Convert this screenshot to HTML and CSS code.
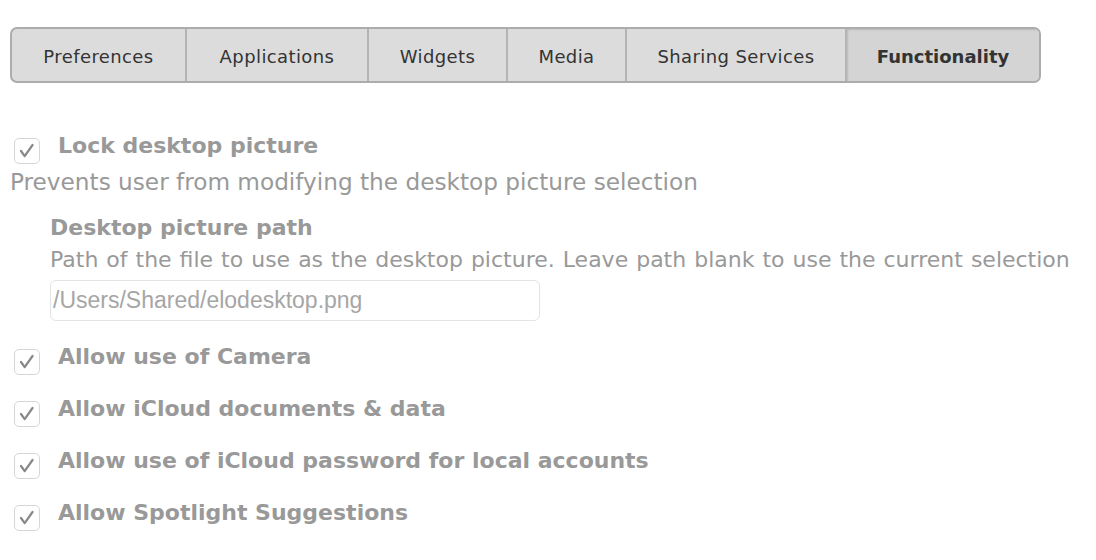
FILE: index.html
```html
<!DOCTYPE html>
<html lang="en">
<head>
    <meta charset="UTF-8">
    <title>Functionality</title>
    <link rel="stylesheet" href="styles.css">
</head>
<body>
    <nav class="tabs">
        <a href="#" class="tab tab-pref">Preferences</a>
        <a href="#" class="tab tab-apps">Applications</a>
        <a href="#" class="tab tab-widgets">Widgets</a>
        <a href="#" class="tab tab-media">Media</a>
        <a href="#" class="tab tab-sharing">Sharing Services</a>
        <a href="#" class="tab tab-func active">Functionality</a>
    </nav>

    <div class="settings">
        <div class="option">
            <label class="check-row">
                <span class="box"><svg viewBox="0 0 26 26"><path d="M6.5 13 L10.5 18.5 L19 6.5"/></svg></span>
                <span class="check-label">Lock desktop picture</span>
            </label>
            <div class="desc">Prevents user from modifying the desktop picture selection</div>
        </div>

        <div class="sub-option">
            <div class="sub-title">Desktop picture path</div>
            <div class="sub-desc">Path of the file to use as the desktop picture. Leave path blank to use the current selection</div>
            <input type="text" class="path-input" placeholder="/Users/Shared/elodesktop.png">
        </div>

        <label class="check-row">
            <span class="box"><svg viewBox="0 0 26 26"><path d="M6.5 13 L10.5 18.5 L19 6.5"/></svg></span>
            <span class="check-label">Allow use of Camera</span>
        </label>
        <label class="check-row">
            <span class="box"><svg viewBox="0 0 26 26"><path d="M6.5 13 L10.5 18.5 L19 6.5"/></svg></span>
            <span class="check-label">Allow iCloud documents &amp; data</span>
        </label>
        <label class="check-row">
            <span class="box"><svg viewBox="0 0 26 26"><path d="M6.5 13 L10.5 18.5 L19 6.5"/></svg></span>
            <span class="check-label">Allow use of iCloud password for local accounts</span>
        </label>
        <label class="check-row">
            <span class="box"><svg viewBox="0 0 26 26"><path d="M6.5 13 L10.5 18.5 L19 6.5"/></svg></span>
            <span class="check-label">Allow Spotlight Suggestions</span>
        </label>
    </div>
</body>
</html>
```

FILE: styles.css
```css
body {
    margin: 0;
    padding: 27px 10px 0;
    font-family: "DejaVu Sans", sans-serif;
    color: #999;
    background: #fff;
    overflow: hidden;
    white-space: nowrap;
}
.tabs {
    display: flex;
    width: 1027px;
    height: 52px;
    border: 2px solid #acacac;
    border-radius: 7px;
    background-color: #dcdcdc;
    overflow: hidden;
}
.tab {
    display: flex;
    align-items: center;
    justify-content: center;
    padding-top: 3px;
    color: #333;
    font-size: 18px;
    letter-spacing: 0.4px;
    text-decoration: none;
    border-left: 2px solid #b4b4b4;
}
.tab:first-child {
    border-left: none;
}
.tab-pref { width: 173px; }
.tab-apps { width: 180px; }
.tab-widgets { width: 137px; }
.tab-media { width: 117px; }
.tab-sharing { width: 218px; }
.tab-func { flex: 1; }
.tab.active {
    font-weight: bold;
    letter-spacing: 0;
    background-color: #d4d4d4;
    box-shadow: inset 1px 1px 2px rgba(0, 0, 0, 0.12);
}
.settings {
    padding-top: 48px;
}
.check-row {
    display: flex;
    align-items: center;
    gap: 18px;
    padding-left: 4px;
    height: 30px;
    margin-bottom: 22px;
}
.box {
    flex: none;
    align-self: flex-start;
    margin-top: 7px;
    width: 26px;
    height: 26px;
    border: 1px solid #d6d6d6;
    border-radius: 5px;
    box-sizing: border-box;
}
.box svg {
    display: block;
    width: 24px;
    height: 24px;
    fill: none;
    stroke: #888;
    stroke-width: 2.4;
    stroke-linecap: round;
    stroke-linejoin: round;
}
.check-label {
    font-size: 22px;
    font-weight: bold;
    line-height: 30px;
}
.option .check-row {
    margin-bottom: 0;
}
.desc {
    font-size: 23.2px;
    line-height: 28px;
    margin-top: 7px;
}
.sub-option {
    padding-left: 40px;
    margin-top: 18px;
    margin-bottom: 21px;
}
.sub-title {
    font-size: 22px;
    font-weight: bold;
    line-height: 28px;
}
.sub-desc {
    font-size: 22px;
    word-spacing: 1px;
    line-height: 28px;
    margin-top: 4px;
}
.path-input {
    display: block;
    margin-top: 6px;
    width: 490px;
    height: 41px;
    box-sizing: border-box;
    border: 1px solid #e3e3e3;
    border-radius: 6px;
    padding: 0 0 0 2px;
    font-family: "Liberation Sans", sans-serif;
    font-size: 23px;
    color: #a6a6a6;
    outline: none;
}
.path-input::placeholder {
    color: #a6a6a6;
}
```
